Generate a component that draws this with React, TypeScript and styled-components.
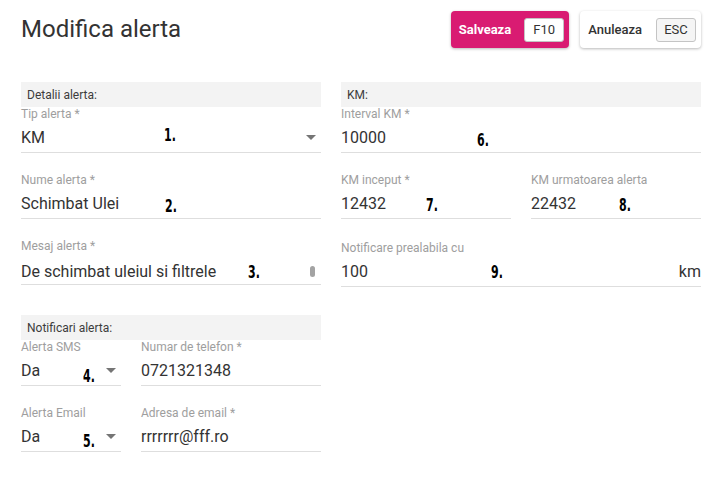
import React from "react";
import styled, { createGlobalStyle } from "styled-components";

const Global = createGlobalStyle`
  html, body { margin: 0; padding: 0; background: #ffffff; }
  body { font-family: Roboto, "Noto Sans", "Liberation Sans", sans-serif; color: #333; }
  * { box-sizing: border-box; }
`;

const Page = styled.div`
  width: 720px;
  height: 494px;
  padding: 11px 19px 0 21px;
  background: #fff;
`;

const TopBar = styled.div`
  display: flex;
  align-items: center;
  justify-content: space-between;
  height: 37px;
`;

const Title = styled.h1`
  margin: 0;
  font-size: 24px;
  line-height: 37px;
  font-weight: 400;
  color: #333;
`;

const Actions = styled.div`
  display: flex;
  gap: 11px;
`;

const ActionButton = styled.button<{ $primary?: boolean }>`
  display: flex;
  align-items: center;
  height: 37px;
  padding: 0 5px 0 8px;
  gap: ${(p) => (p.$primary ? 13 : 14)}px;
  border: none;
  border-radius: 4px;
  background: ${(p) => (p.$primary ? "#d91b72" : "#ffffff")};
  color: ${(p) => (p.$primary ? "#ffffff" : "#333")};
  box-shadow: 0 1px 3px rgba(0, 0, 0, 0.28);
  font-family: Roboto, "Liberation Sans", sans-serif;
  font-size: 13px;
  font-weight: ${(p) => (p.$primary ? 700 : 500)};
  cursor: pointer;
`;

const Kbd = styled.span<{ $gray?: boolean }>`
  display: flex;
  align-items: center;
  justify-content: center;
  width: 40px;
  height: 24px;
  border: 1px solid #c4c4c4;
  border-radius: 3px;
  background: ${(p) => (p.$gray ? "#f5f5f5" : "#ffffff")};
  color: #333;
  font-size: 13px;
  font-weight: 400;
`;

const Grid = styled.div`
  display: grid;
  grid-template-columns: 300px 360px;
  column-gap: 20px;
  margin-top: 34px;
  align-items: start;
`;

const Column = styled.div`
  display: flex;
  flex-direction: column;
`;

const SectionHeader = styled.div<{ $top?: number }>`
  height: 25px;
  margin-top: ${(p) => p.$top ?? 0}px;
  padding-left: 6px;
  display: flex;
  align-items: center;
  background: #f3f3f3;
  font-size: 12px;
  color: #3c3c3c;
`;

const Row = styled.div<{ $top?: number }>`
  display: flex;
  gap: 20px;
  margin-top: ${(p) => p.$top ?? 0}px;
`;

const Field = styled.div<{ $top?: number; $width?: number }>`
  display: flex;
  flex-direction: column;
  margin-top: ${(p) => p.$top ?? 0}px;
  ${(p) => (p.$width ? `width: ${p.$width}px; flex: none;` : "flex: 1;")}
  border-bottom: 1px solid #dedede;
`;

const Label = styled.div`
  font-size: 12px;
  line-height: 15px;
  height: 15px;
  color: #9e9e9e;
  white-space: nowrap;
`;

const Value = styled.div<{ $padTop?: number }>`
  position: relative;
  height: 30px;
  padding-top: ${(p) => p.$padTop ?? 0}px;
  display: flex;
  align-items: center;
  justify-content: space-between;
  font-size: 16px;
  color: #333;
  white-space: nowrap;
`;

const Arrow = styled.svg`
  width: 10px;
  height: 5px;
  margin-right: 5px;
  fill: #757575;
  flex: none;
`;

const Thumb = styled.span`
  width: 5px;
  height: 11px;
  margin-right: 6px;
  border-radius: 3px;
  background: #a3a3a3;
  flex: none;
`;

const Suffix = styled.span`
  font-size: 16px;
  color: #333;
`;

const Mark = styled.span<{ $x: number; $y: number }>`
  position: absolute;
  left: ${(p) => p.$x}px;
  top: ${(p) => p.$y}px;
  font-family: "DejaVu Sans Condensed", "DejaVu Sans", sans-serif;
  font-weight: 700;
  font-size: 17px;
  line-height: 17px;
  color: #000;
  transform: scaleX(0.72);
  transform-origin: left top;
  pointer-events: none;
`;

const DropArrow = () => (
  <Arrow viewBox="0 0 10 5">
    <path d="M0 0l5 5 5-5z" />
  </Arrow>
);

export default function App() {
  return (
    <>
      <Global />
      <Page>
        <TopBar>
          <Title>Modifica alerta</Title>
          <Actions>
            <ActionButton $primary>
              Salveaza
              <Kbd>F10</Kbd>
            </ActionButton>
            <ActionButton>
              Anuleaza
              <Kbd $gray>ESC</Kbd>
            </ActionButton>
          </Actions>
        </TopBar>
        <Grid>
          <Column>
            <SectionHeader>Detalii alerta:</SectionHeader>
            <Field>
              <Label>Tip alerta *</Label>
              <Value>
                <span>KM</span>
                <DropArrow />
                <Mark $x={143} $y={5}>1.</Mark>
              </Value>
            </Field>
            <Field $top={20}>
              <Label>Nume alerta *</Label>
              <Value>
                <span>Schimbat Ulei</span>
                <Mark $x={144} $y={10}>2.</Mark>
              </Value>
            </Field>
            <Field $top={20}>
              <Label>Mesaj alerta *</Label>
              <Value $padTop={5}>
                <span>De schimbat uleiul si filtrele</span>
                <Thumb />
                <Mark $x={227} $y={10}>3.</Mark>
              </Value>
            </Field>
            <SectionHeader $top={30}>Notificari alerta:</SectionHeader>
            <Row>
              <Field $width={100}>
                <Label>Alerta SMS</Label>
                <Value>
                  <span>Da</span>
                  <DropArrow />
                  <Mark $x={62} $y={13}>4.</Mark>
                </Value>
              </Field>
              <Field>
                <Label>Numar de telefon *</Label>
                <Value>
                  <span>0721321348</span>
                </Value>
              </Field>
            </Row>
            <Row $top={20}>
              <Field $width={100}>
                <Label>Alerta Email</Label>
                <Value>
                  <span>Da</span>
                  <DropArrow />
                  <Mark $x={62} $y={12}>5.</Mark>
                </Value>
              </Field>
              <Field>
                <Label>Adresa de email *</Label>
                <Value>
                  <span>rrrrrrr@fff.ro</span>
                </Value>
              </Field>
            </Row>
          </Column>
          <Column>
            <SectionHeader>KM:</SectionHeader>
            <Field>
              <Label>Interval KM *</Label>
              <Value>
                <span>10000</span>
                <Mark $x={136} $y={10}>6.</Mark>
              </Value>
            </Field>
            <Row $top={20}>
              <Field>
                <Label>KM inceput *</Label>
                <Value>
                  <span>12432</span>
                  <Mark $x={85} $y={9}>7.</Mark>
                </Value>
              </Field>
              <Field>
                <Label>KM urmatoarea alerta</Label>
                <Value>
                  <span>22432</span>
                  <Mark $x={88} $y={9}>8.</Mark>
                </Value>
              </Field>
            </Row>
            <Field $top={22}>
              <Label>Notificare prealabila cu</Label>
              <Value>
                <span>100</span>
                <Suffix>km</Suffix>
                <Mark $x={150} $y={8}>9.</Mark>
              </Value>
            </Field>
          </Column>
        </Grid>
      </Page>
    </>
  );
}
